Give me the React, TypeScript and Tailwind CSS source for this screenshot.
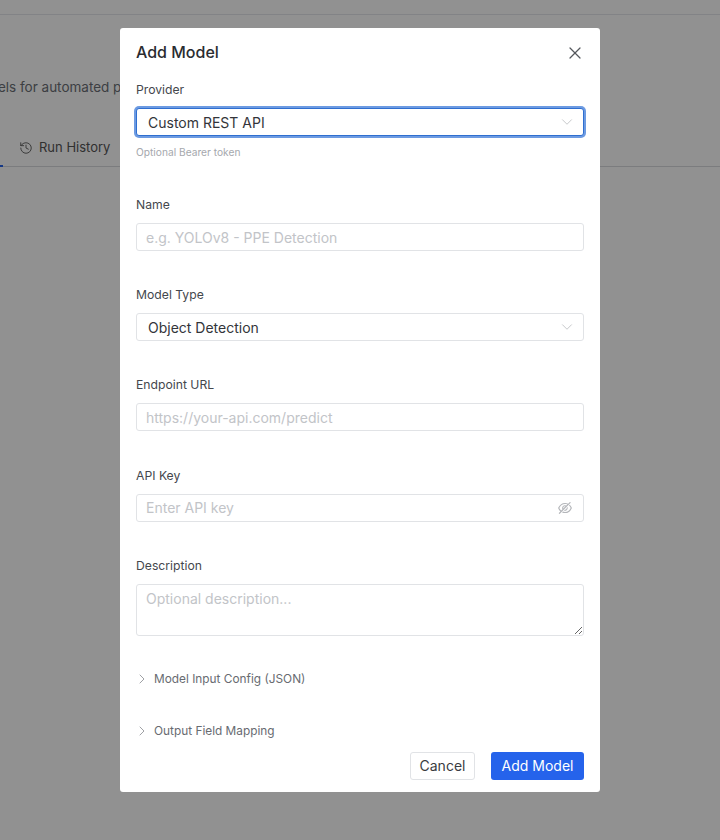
import { ChevronDown, ChevronRight, History, X } from "lucide-react"
import { AiOutlineEyeInvisible } from "react-icons/ai"

const font = { fontFamily: "Inter, 'Liberation Sans', sans-serif" }

function Label({ children }: { children: string }) {
  return <div className="h-5 mb-[10px] text-[12.2px] leading-[23px] text-[#44474d]">{children}</div>
}

function Select({ value, focused }: { value: string; focused?: boolean }) {
  return (
    <div
      className={
        focused
          ? "h-7 flex items-center justify-between pl-[11px] pr-[7px] rounded-[3px] border border-[#2f6fd0] ring-2 ring-[#6d9be2] bg-white"
          : "h-7 flex items-center justify-between pl-[11px] pr-[7px] rounded-[3px] border border-[#e1e3e6] bg-white"
      }
    >
      <span className="text-[14px] text-[#33353a]">{value}</span>
      <ChevronDown className="size-[18px] text-[#b4b6ba]" strokeWidth={1} />
    </div>
  )
}

function Input({ placeholder, children }: { placeholder: string; children?: React.ReactNode }) {
  return (
    <div className="h-7 flex items-center justify-between pl-[9px] pr-[10px] rounded-[3px] border border-[#e1e3e6] bg-white">
      <span className="text-[14px] text-[#c2c4c8]">{placeholder}</span>
      {children}
    </div>
  )
}

function Collapse({ title }: { title: string }) {
  return (
    <div className="flex items-center h-5 text-[11.85px] text-[#686b71]">
      <ChevronRight className="size-4 -ml-[2px] mr-[4px] text-[#8b8e93]" strokeWidth={1.25} />
      <span className="pt-[2px]">{title}</span>
    </div>
  )
}

export default function App() {
  return (
    <div className="relative w-[720px] h-[840px] overflow-hidden bg-white" style={font}>
      <div className="h-[15px] border-b border-[#e5e7eb]" />
      <div className="mt-[62px] -ml-[114px] whitespace-nowrap text-[13.5px] leading-5 text-[#6b6f76]">
        Configure AI models for automated processing
      </div>
      <div className="mt-[40px] h-[30px] border-b border-[#d9dbde] relative">
        <div className="ml-[19px] flex items-center gap-[6px] text-[13px] leading-[21px] text-[#555]">
          <History className="size-[14px]" strokeWidth={1.5} />
          Run History
        </div>
        <div className="absolute left-0 bottom-[-1px] w-[3px] h-[2px] bg-[#2563eb]" />
      </div>

      <div className="absolute inset-0 bg-black/43" />

      <div className="absolute left-[120px] top-[28px] w-[480px] h-[764px] bg-white rounded-[3px] px-4 flex flex-col">
        <div className="h-[50px] pt-[12px] flex items-start justify-between">
          <span className="text-[16px] leading-6 font-medium text-[#2a2c30]">Add Model</span>
          <X className="size-5 mt-[3px] -mr-[1px] text-[#55585d]" strokeWidth={1.5} />
        </div>

        <Label>Provider</Label>
        <Select value="Custom REST API" focused />
        <div className="mt-[8px] mb-[33px] h-4 text-[10.2px] leading-4 text-[#a5a8ad]">Optional Bearer token</div>

        <Label>Name</Label>
        <Input placeholder="e.g. YOLOv8 - PPE Detection" />

        <div className="mt-[32.2px]">
          <Label>Model Type</Label>
          <Select value="Object Detection" />
        </div>

        <div className="mt-[32.2px]">
          <Label>Endpoint URL</Label>
          <Input placeholder="https://your-api.com/predict" />
        </div>

        <div className="mt-[32.2px]">
          <Label>API Key</Label>
          <Input placeholder="Enter API key">
            <AiOutlineEyeInvisible className="size-4 text-[#b4b6ba]" />
          </Input>
        </div>

        <div className="mt-[32.2px]">
          <Label>Description</Label>
          <textarea
            readOnly
            placeholder="Optional description..."
            className="block w-full h-[52px] px-[9px] py-[4px] rounded-[3px] border border-[#e1e3e6] bg-white text-[14px] leading-5 outline-none placeholder:text-[#c2c4c8]"
          />
        </div>

        <div className="mt-[33px]">
          <Collapse title="Model Input Config (JSON)" />
        </div>
        <div className="mt-[32px]">
          <Collapse title="Output Field Mapping" />
        </div>

        <div className="mt-[11px] flex justify-end gap-4">
          <button className="h-7 w-[65px] rounded-[3px] border border-[#e1e3e6] bg-white text-[14px] text-[#3a3c41]">
            Cancel
          </button>
          <button className="h-7 w-[93px] rounded-[3px] bg-[#2563eb] text-[14px] text-white">Add Model</button>
        </div>
      </div>
    </div>
  )
}
